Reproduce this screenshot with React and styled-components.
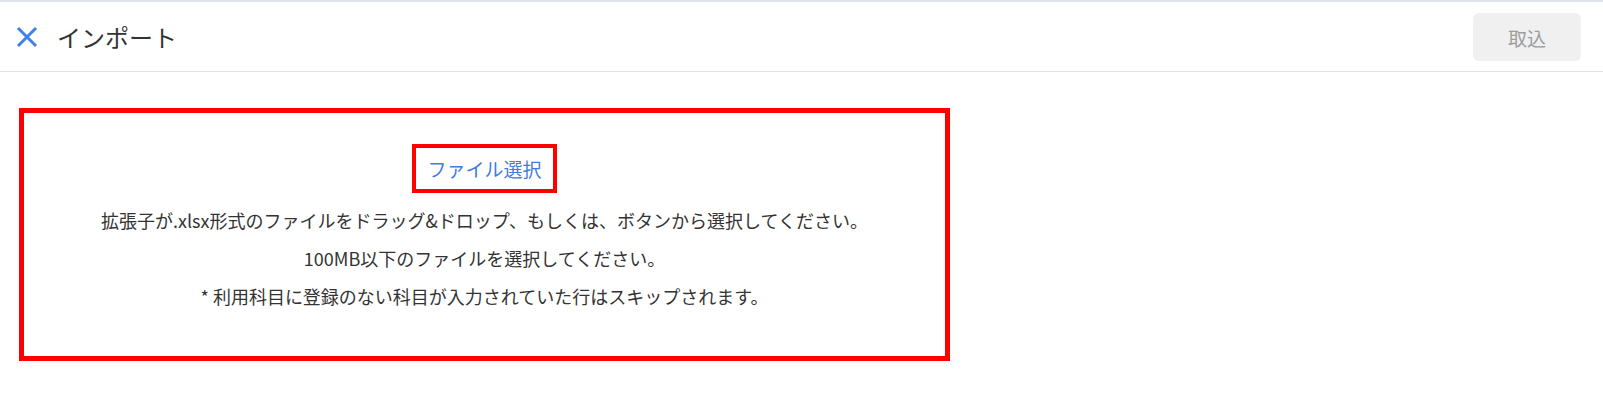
import React from "react";
import styled, { createGlobalStyle } from "styled-components";

const Global = createGlobalStyle`
  html, body { margin: 0; padding: 0; background: #fff; }
  body { font-family: "Noto Sans CJK JP", "Noto Sans", sans-serif; color: #333; }
`;

const Page = styled.div`
  border-top: 2px solid #dfe4ee;
`;

const Header = styled.header`
  height: 69px;
  display: flex;
  align-items: center;
  justify-content: space-between;
  padding: 0 22px 0 14px;
  border-bottom: 1px solid #e2e2e2;
`;

const TitleGroup = styled.div`
  display: flex;
  align-items: center;
  gap: 17px;
`;

const CloseButton = styled.button`
  border: none;
  background: none;
  padding: 0;
  width: 26px;
  height: 26px;
  display: flex;
  align-items: center;
  justify-content: center;
  cursor: pointer;
`;

const Title = styled.h1`
  margin: 0;
  font-size: 24px;
  font-weight: 400;
  color: #333;
`;

const ImportButton = styled.button`
  width: 108px;
  height: 48px;
  border: none;
  border-radius: 6px;
  background: #f0f0f0;
  color: #9e9e9e;
  font-family: inherit;
  font-size: 19px;
  margin-top: 1px;
`;

const Content = styled.main`
  padding: 36px 19px;
`;

const DropZone = styled.section`
  width: 921px;
  border: 5px solid #ff0000;
  padding: 31px 0 41px;
  display: flex;
  flex-direction: column;
  align-items: center;
`;

const SelectButton = styled.button`
  border: 4px solid #ff0000;
  background: #fff;
  width: 145px;
  height: 49px;
  padding: 0;
  color: #3f7be0;
  font-family: inherit;
  font-size: 19px;
  margin-bottom: 8px;
  cursor: pointer;
`;

const Note = styled.p`
  margin: 0;
  font-size: 18px;
  line-height: 38px;
  color: #333;
  text-align: center;
`;

export default function App() {
  return (
    <>
      <Global />
      <Page>
        <Header>
          <TitleGroup>
            <CloseButton aria-label="close">
              <svg width="22" height="22" viewBox="0 0 22 22">
                <path d="M2 2 L20 20 M20 2 L2 20" stroke="#3f81e6" strokeWidth="3" fill="none" />
              </svg>
            </CloseButton>
            <Title>インポート</Title>
          </TitleGroup>
          <ImportButton disabled>取込</ImportButton>
        </Header>
        <Content>
          <DropZone>
            <SelectButton>ファイル選択</SelectButton>
            <Note>拡張子が.xlsx形式のファイルをドラッグ&amp;ドロップ、もしくは、ボタンから選択してください。</Note>
            <Note>100MB以下のファイルを選択してください。</Note>
            <Note>* 利用科目に登録のない科目が入力されていた行はスキップされます。</Note>
          </DropZone>
        </Content>
      </Page>
    </>
  );
}
